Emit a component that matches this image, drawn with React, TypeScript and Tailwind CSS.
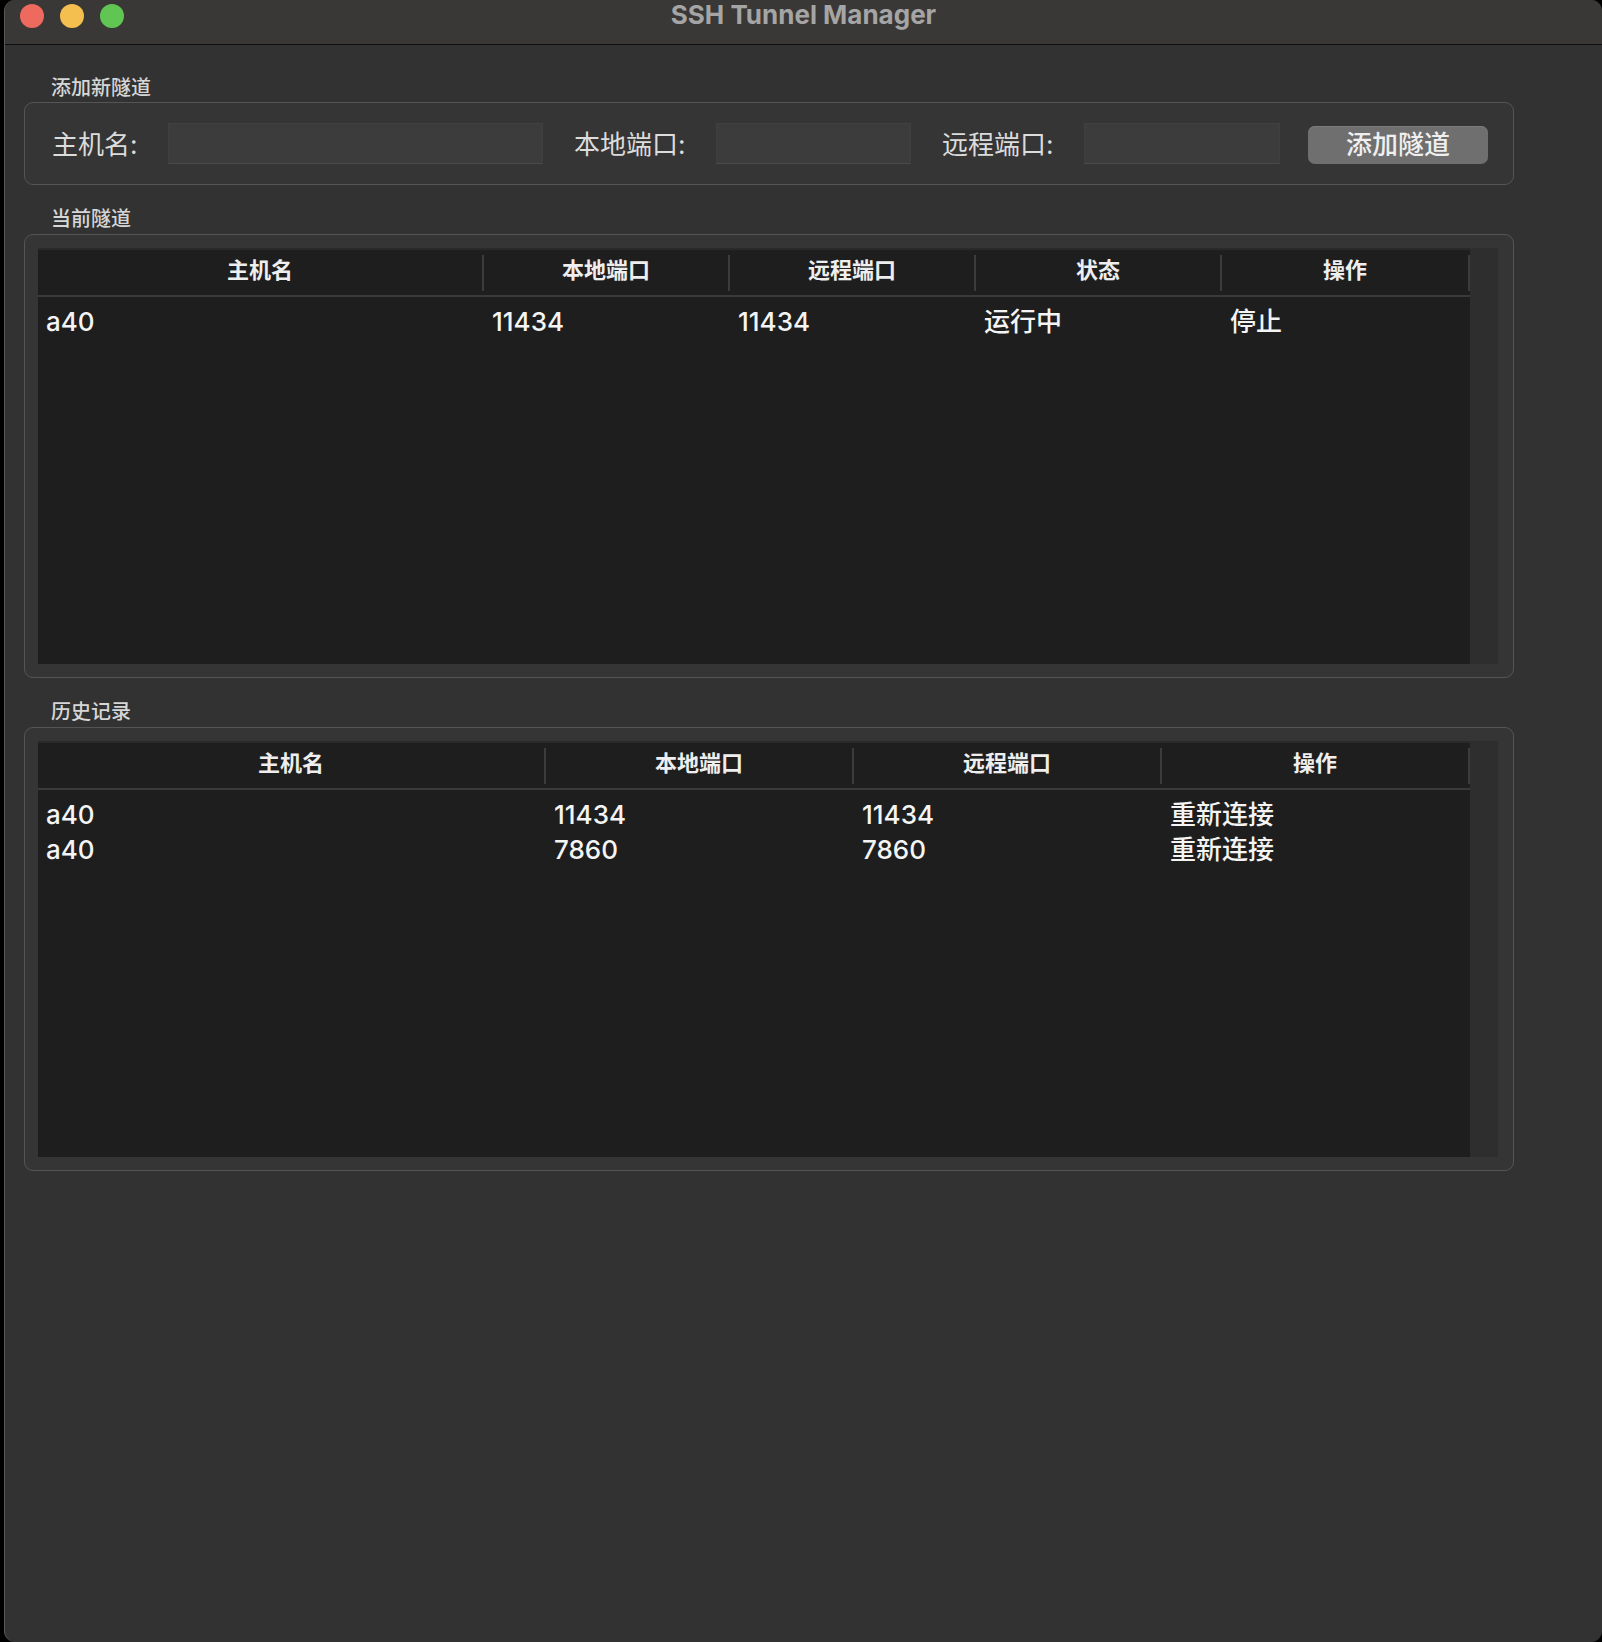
const CURRENT_COLUMNS = [
  { title: "主机名", width: "w-[446px]" },
  { title: "本地端口", width: "w-[246px]" },
  { title: "远程端口", width: "w-[246px]" },
  { title: "状态", width: "w-[246px]" },
  { title: "操作", width: "flex-1" },
];

const CURRENT_ROWS = [["a40", "11434", "11434", "运行中", "停止"]];

const HISTORY_COLUMNS = [
  { title: "主机名", width: "w-[508px]" },
  { title: "本地端口", width: "w-[308px]" },
  { title: "远程端口", width: "w-[308px]" },
  { title: "操作", width: "flex-1" },
];

const HISTORY_ROWS = [
  ["a40", "11434", "11434", "重新连接"],
  ["a40", "7860", "7860", "重新连接"],
];

type Column = { title: string; width: string };

const GroupTitle = ({ text, className }: { text: string; className: string }) => (
  <div className={`h-[24px] pl-[27px] text-[20px] leading-[24px] font-medium text-[#d6d6d6] ${className}`}>
    {text}
  </div>
);

const Table = ({ columns, rows }: { columns: Column[]; rows: string[][] }) => (
  <div className="flex h-[416px]">
    <div className="flex w-[1432px] flex-col border-t-2 border-[#2a2a2a] bg-[#1e1e1e]">
      <div className="flex h-[47px] border-b-2 border-[#3a3a3a]">
        {columns.map((col) => (
          <div key={col.title} className={`${col.width} flex items-center`}>
            <div className="flex-1 pb-[4px] text-center text-[22px] font-bold text-[#eeeeee]">{col.title}</div>
            <div className="h-[36px] w-[2px] bg-[#3c3c3c]" />
          </div>
        ))}
      </div>
      <div className="pt-[7px]">
        {rows.map((row, i) => (
          <div key={i} className="flex h-[35px] items-center">
            {row.map((cell, j) => (
              <div key={j} className={`${columns[j].width} pl-[8px] text-[26px] leading-[35px] font-medium text-[#f4f4f4]`}>
                {cell}
              </div>
            ))}
          </div>
        ))}
      </div>
    </div>
    <div className="w-[28px] bg-[#2e2e2e]" />
  </div>
);

const Field = ({ label, labelWidth, inputWidth, className }: { label: string; labelWidth: string; inputWidth: string; className?: string }) => (
  <div className={`flex items-center ${className ?? ""}`}>
    <div className={`${labelWidth} pt-[2px] text-[26px] text-[#dcdcdc]`}>{label}</div>
    <div className={`${inputWidth} h-[41px] border border-[#404040] border-b-[#4a4a4a] bg-[#3c3c3c]`} />
  </div>
);

export default function App() {
  return (
    <div className="h-[1642px] w-[1602px] bg-black pl-[4px] font-[Inter,'Noto_Sans_CJK_SC',sans-serif]">
      <div className="flex h-full flex-col overflow-hidden rounded-[11px] border-l border-[#585858] bg-[#323232]">
        {/* title bar */}
        <div className="relative flex h-[45px] shrink-0 items-start gap-[16px] border-b border-[#0e0e0e] bg-[#3a3836] pl-[15px] pt-[4px]">
          <div className="h-[24px] w-[24px] rounded-full bg-[#ee6a5f]" />
          <div className="h-[24px] w-[24px] rounded-full bg-[#f5bf4f]" />
          <div className="h-[24px] w-[24px] rounded-full bg-[#61c554]" />
          <div className="absolute inset-x-0 top-0 text-center text-[26px] leading-[30px] font-bold text-[#a5a5a5]">
            SSH Tunnel Manager
          </div>
        </div>

        <div className="flex flex-col pl-[19px]">
          <GroupTitle text="添加新隧道" className="mt-[31px]" />
          <div className="mt-[2px] flex h-[83px] w-[1490px] items-center rounded-[9px] border border-[#555555] bg-[#353535] pl-[27px]">
            <Field label="主机名:" labelWidth="w-[116px]" inputWidth="w-[375px]" />
            <Field label="本地端口:" labelWidth="w-[142px]" inputWidth="w-[195px]" className="ml-[31px]" />
            <Field label="远程端口:" labelWidth="w-[142px]" inputWidth="w-[196px]" className="ml-[31px]" />
            <button className="ml-[28px] mt-[3px] h-[38px] w-[180px] rounded-[7px] bg-[#6f6f6f] text-[26px] leading-[38px] font-medium text-[#efefef] shadow-[inset_0_1px_0_#7c7c7c]">
              添加隧道
            </button>
          </div>

          <GroupTitle text="当前隧道" className="mt-[22px]" />
          <div className="mt-[3px] h-[444px] w-[1490px] rounded-[9px] border border-[#555555] bg-[#353535] pl-[13px] pt-[13px]">
            <Table columns={CURRENT_COLUMNS} rows={CURRENT_ROWS} />
          </div>

          <GroupTitle text="历史记录" className="mt-[22px]" />
          <div className="mt-[3px] h-[444px] w-[1490px] rounded-[9px] border border-[#555555] bg-[#353535] pl-[13px] pt-[13px]">
            <Table columns={HISTORY_COLUMNS} rows={HISTORY_ROWS} />
          </div>
        </div>
      </div>
    </div>
  );
}
